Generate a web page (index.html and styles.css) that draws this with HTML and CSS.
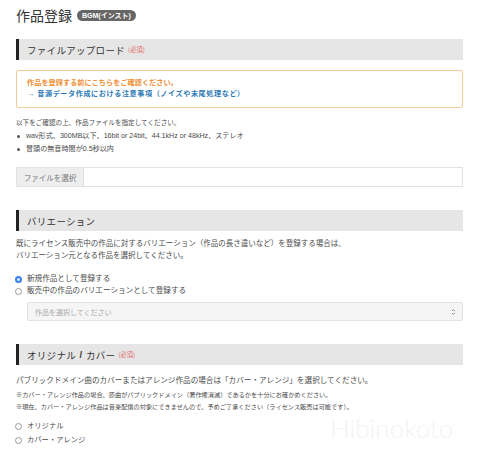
FILE: index.html
```html
<!DOCTYPE html>
<html lang="ja">
<head>
<meta charset="utf-8">
<title>作品登録</title>
<link rel="stylesheet" href="styles.css">
</head>
<body>
<main class="page">
  <h1 class="title">作品登録 <span class="badge">BGM(インスト)</span></h1>

  <section>
    <h2 class="sec-head">ファイルアップロード <span class="req">(必須)</span></h2>
    <div class="notice">
      <p class="notice-warn">作品を登録する前にこちらをご確認ください。</p>
      <a class="notice-link">→ 音源データ作成における注意事項（ノイズや末尾処理など）</a>
    </div>
    <p class="intro">以下をご確認の上、作品ファイルを指定してください。</p>
    <ul class="bullets">
      <li>wav形式、300MB以下、16bit or 24bit、44.1kHz or 48kHz、ステレオ</li>
      <li>冒頭の無音時間が0.5秒以内</li>
    </ul>
    <div class="file"><span class="file-btn">ファイルを選択</span></div>
  </section>

  <section>
    <h2 class="sec-head sec-gap">バリエーション</h2>
    <p class="desc">既にライセンス販売中の作品に対するバリエーション（作品の長さ違いなど）を登録する場合は、<br>バリエーション元となる作品を選択してください。</p>
    <div class="radios">
      <label class="radio"><span class="dot on"></span>新規作品として登録する</label>
      <label class="radio"><span class="dot"></span>販売中の作品のバリエーションとして登録する</label>
    </div>
    <div class="select">
      <span>作品を選択してください</span>
      <svg class="arrows" width="5" height="8" viewBox="0 0 5 8"><path d="M1 3 L2.5 1.5 L4 3 M1 5 L2.5 6.5 L4 5" fill="none" stroke="#888" stroke-width="0.9"/></svg>
    </div>
  </section>

  <section>
    <h2 class="sec-head sec-gap">オリジナル <span class="slash">/</span> カバー <span class="req">(必須)</span></h2>
    <p class="desc desc-cover">パブリックドメイン曲のカバーまたはアレンジ作品の場合は「カバー・アレンジ」を選択してください。</p>
    <p class="notes">※カバー・アレンジ作品の場合、原曲がパブリックドメイン（著作権消滅）であるかを十分にお確かめください。<br>※現在、カバー・アレンジ作品は音楽配信の対象にできませんので、予めご了承ください（ライセンス販売は可能です）。</p>
    <div class="radios radios-cover">
      <label class="radio"><span class="dot"></span>オリジナル</label>
      <label class="radio"><span class="dot"></span>カバー・アレンジ</label>
    </div>
  </section>

  <div class="watermark">Hibinokoto</div>
</main>
</body>
</html>
```
FILE: styles.css
```css
body {
  margin: 0;
  background: #fff;
  font-family: "Liberation Sans", "Noto Sans CJK JP", sans-serif;
  color: #4a4a4a;
}

.page {
  position: relative;
  padding: 6px 17px 30px 16px;
}

p { margin: 0; }

.title {
  margin: 0;
  display: flex;
  align-items: center;
  gap: 5px;
  font-family: "Noto Sans CJK JP", sans-serif;
  font-size: 14px;
  font-weight: 400;
  line-height: 18px;
  color: #333;
}

.badge {
  background: #666;
  color: #fff;
  font-family: "Liberation Sans", "Noto Sans CJK JP", sans-serif;
  font-size: 7px;
  font-weight: 700;
  line-height: 11px;
  padding: 0 5px;
  border-radius: 5.5px;
}

.sec-head {
  margin: 15px 0 0;
  height: 21px;
  box-sizing: border-box;
  background: #e6e6e6;
  border-left: 3px solid #222;
  padding-left: 8px;
  display: flex;
  align-items: center;
  gap: 2px;
  font-family: "Noto Sans CJK JP", sans-serif;
  font-size: 9.5px;
  font-weight: 400;
  letter-spacing: 0.3px;
  color: #333;
}

.sec-gap { margin-top: 23px; }

.slash {
  font-family: "Liberation Sans", sans-serif;
  font-weight: 700;
  padding: 0 1.5px;
}

.req {
  font-size: 6.3px;
  color: #e26b6b;
  letter-spacing: 0;
  margin-left: 1px;
}

.notice {
  margin-top: 10px;
  border: 1px solid #f0cc98;
  border-radius: 2px;
  padding: 7px 10px;
}

.notice-warn,
.notice-link {
  display: block;
  font-size: 7.1px;
  line-height: 11px;
  font-weight: 700;
}

.notice-warn {
  color: #ee8f34;
  letter-spacing: 0.1px;
}

.notice-link {
  color: #2c79b4;
  letter-spacing: 0.6px;
}

.intro {
  margin-top: 9px;
  font-size: 6.6px;
  line-height: 12px;
}

.bullets {
  list-style: none;
  margin: 1px 0 0;
  padding: 0;
  font-size: 7.1px;
  line-height: 13px;
}

.bullets li::before {
  content: "";
  display: inline-block;
  width: 3px;
  height: 3px;
  border-radius: 50%;
  background: #555;
  margin: 0 6px 0 1px;
  vertical-align: middle;
}

.file {
  margin-top: 11px;
  height: 20px;
  box-sizing: border-box;
  border: 1px solid #e2e2e2;
  display: flex;
}

.file-btn {
  width: 66px;
  background: #eee;
  border-right: 1px solid #e0e0e0;
  display: flex;
  align-items: center;
  justify-content: center;
  font-size: 7.5px;
  color: #777;
}

.desc {
  margin-top: 7px;
  font-size: 7.5px;
  line-height: 12px;
}

.radios {
  margin-top: 11px;
  font-size: 7.6px;
  line-height: 12px;
}

.radio {
  display: flex;
  align-items: center;
  gap: 5px;
}

.dot {
  width: 7px;
  height: 7px;
  box-sizing: border-box;
  border: 1px solid #999;
  border-radius: 50%;
  background: #fff;
  margin-left: -1px;
}

.dot.on {
  border: 2px solid #3a80ef;
  background: #dce8fb;
}

.select {
  margin: 5px 0 0 11px;
  height: 19px;
  box-sizing: border-box;
  background: #f5f5f5;
  border: 1px solid #e2e2e2;
  border-radius: 2px;
  padding: 0 6px 0 7px;
  display: flex;
  align-items: center;
  justify-content: space-between;
  font-size: 7px;
  color: #aaa;
}

.desc-cover {
  margin-top: 10px;
  font-size: 7.6px;
}

.notes {
  margin-top: 2px;
  font-family: "Noto Sans CJK JP", sans-serif;
  font-size: 6.2px;
  line-height: 12px;
}

.radios-cover {
  margin-top: 6px;
  font-size: 7.3px;
  line-height: 14px;
}

.watermark {
  position: absolute;
  left: 330px;
  top: 412px;
  font-family: "Lato", sans-serif;
  font-weight: 300;
  font-size: 26px;
  color: #f3f3f3;
  pointer-events: none;
}
```
